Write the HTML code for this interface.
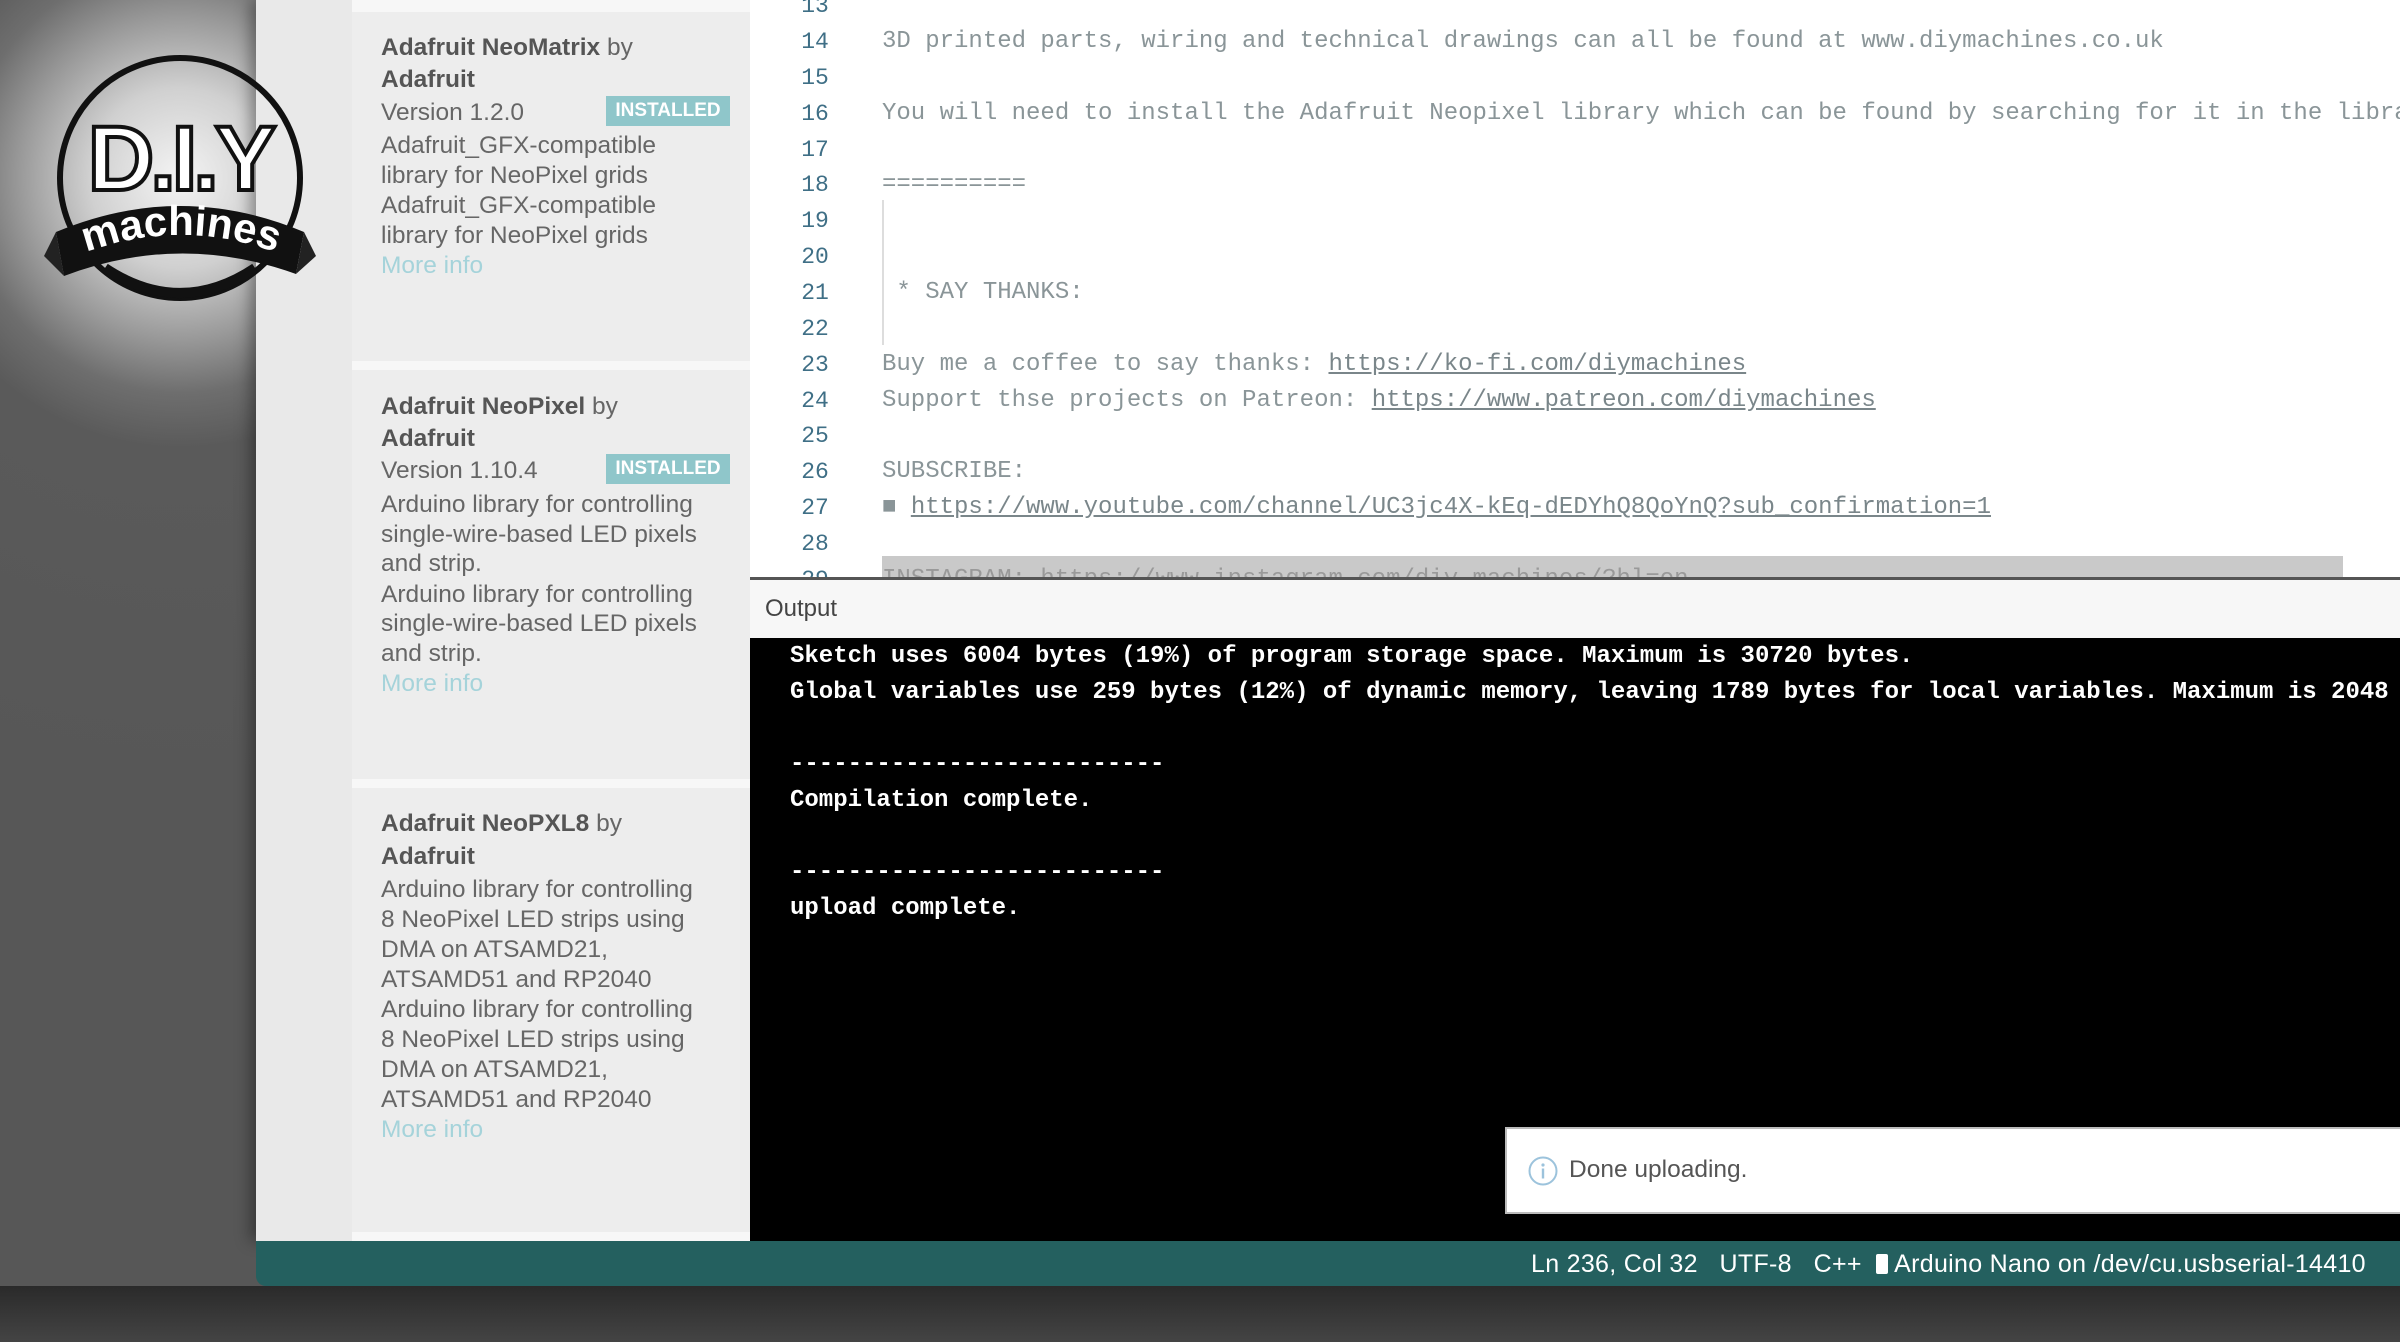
<!DOCTYPE html>
<html><head><meta charset="utf-8"><style>
*{margin:0;padding:0;box-sizing:border-box}
body{width:2400px;height:1342px;overflow:hidden;position:relative;background:#555;font-family:"Liberation Sans",sans-serif}
#bg{position:absolute;left:0;top:0;width:2400px;height:1342px;background:radial-gradient(circle at 180px 178px,#f4f4f4 0,#d0d0d0 90px,#9a9a9a 160px,#6e6e6e 215px,#5a5a5a 270px,#575757 600px)}
#bottom{position:absolute;left:0;top:1286px;width:2400px;height:56px;background:linear-gradient(#2a2a2a,#444)}
#side{position:absolute;left:256px;top:0;width:494px;height:1241px;background:#e9e9e9;box-shadow:-6px 0 14px rgba(0,0,0,.35)}
.card{position:absolute;left:96px;width:398px;background:#ededed}
.gap{position:absolute;left:96px;width:398px;background:#f7f7f7}
.t{position:absolute;left:381px;font-size:24.5px;color:#666;white-space:nowrap;line-height:30px}
.b{font-weight:bold;color:#555}
.m{color:#a5d3da}
.badge{position:absolute;left:606px;width:124px;height:30px;background:#8fc6ca;color:#fff;font-weight:bold;font-size:19px;text-align:center;line-height:30px}
#ed{position:absolute;left:750px;top:0;width:1650px;height:577px;background:#fff;overflow:hidden}
.ln{position:absolute;left:0;width:130px;text-align:center;font-family:"Liberation Mono",monospace;font-size:23px;color:#3f6f86;line-height:36px}
.cd{position:absolute;left:132px;font-family:"Liberation Mono",monospace;font-size:24px;color:#8a9598;white-space:pre;line-height:36px}
.cd u{text-decoration:underline;color:#7a868a}
#outh{position:absolute;left:750px;top:577px;width:1650px;height:61px;background:#f7f7f7;border-top:3px solid #555}
#con{position:absolute;left:750px;top:638px;width:1650px;height:603px;background:#000;overflow:hidden}
.cl{position:absolute;left:40px;font-family:"Liberation Mono",monospace;font-weight:bold;font-size:24px;color:#fff;white-space:pre;line-height:36px}
#toast{position:absolute;left:1505px;top:1127px;width:900px;height:87px;background:#fff;border:2px solid #bbb}
#status{position:absolute;left:256px;top:1241px;width:2144px;height:45px;background:#24605f;border-bottom-left-radius:10px;color:#fff;font-size:25px;line-height:47px;white-space:nowrap;letter-spacing:0.3px}
</style></head><body>
<div id="bg"></div>
<div id="bottom"></div>
<div id="side">
<div class="gap" style="top:0;height:12px"></div>
<div class="card" style="top:12px;height:349px"></div>
<div class="gap" style="top:361px;height:9px"></div>
<div class="card" style="top:370px;height:409px"></div>
<div class="gap" style="top:779px;height:9px"></div>
<div class="card" style="top:788px;height:444px"></div>
<div class="gap" style="top:1232px;height:9px"></div>
</div>
<div class="t" style="top:33px"><span class="b">Adafruit NeoMatrix</span> by</div>
<div class="t b" style="top:65px">Adafruit</div>
<div class="t" style="top:98px">Version 1.2.0</div>
<div class="badge" style="top:96px">INSTALLED</div>
<div class="t" style="top:131px">Adafruit_GFX-compatible</div>
<div class="t" style="top:161px">library for NeoPixel grids</div>
<div class="t" style="top:191px">Adafruit_GFX-compatible</div>
<div class="t" style="top:221px">library for NeoPixel grids</div>
<div class="t m" style="top:251px">More info</div>

<div class="t" style="top:392px"><span class="b">Adafruit NeoPixel</span> by</div>
<div class="t b" style="top:424px">Adafruit</div>
<div class="t" style="top:456px">Version 1.10.4</div>
<div class="badge" style="top:454px">INSTALLED</div>
<div class="t" style="top:490px">Arduino library for controlling</div>
<div class="t" style="top:520px">single-wire-based LED pixels</div>
<div class="t" style="top:549px">and strip.</div>
<div class="t" style="top:580px">Arduino library for controlling</div>
<div class="t" style="top:609px">single-wire-based LED pixels</div>
<div class="t" style="top:639px">and strip.</div>
<div class="t m" style="top:669px">More info</div>

<div class="t" style="top:809px"><span class="b">Adafruit NeoPXL8</span> by</div>
<div class="t b" style="top:842px">Adafruit</div>
<div class="t" style="top:875px">Arduino library for controlling</div>
<div class="t" style="top:905px">8 NeoPixel LED strips using</div>
<div class="t" style="top:935px">DMA on ATSAMD21,</div>
<div class="t" style="top:965px">ATSAMD51 and RP2040</div>
<div class="t" style="top:995px">Arduino library for controlling</div>
<div class="t" style="top:1025px">8 NeoPixel LED strips using</div>
<div class="t" style="top:1055px">DMA on ATSAMD21,</div>
<div class="t" style="top:1085px">ATSAMD51 and RP2040</div>
<div class="t m" style="top:1115px">More info</div>

<div id="ed">
<div class="ln" style="top:-12px">13</div>
<div class="ln" style="top:24px">14</div>
<div class="ln" style="top:60px">15</div>
<div class="ln" style="top:96px">16</div>
<div class="ln" style="top:132px">17</div>
<div class="ln" style="top:167px">18</div>
<div class="ln" style="top:203px">19</div>
<div class="ln" style="top:239px">20</div>
<div class="ln" style="top:275px">21</div>
<div class="ln" style="top:311px">22</div>
<div class="ln" style="top:347px">23</div>
<div class="ln" style="top:383px">24</div>
<div class="ln" style="top:418px">25</div>
<div class="ln" style="top:454px">26</div>
<div class="ln" style="top:490px">27</div>
<div class="ln" style="top:526px">28</div>
<div class="ln" style="top:562px">29</div>
<div style="position:absolute;left:132px;top:200px;width:2px;height:145px;background:#ddd"></div>
<div class="cd" style="top:24px">3D printed parts, wiring and technical drawings can all be found at www.diymachines.co.uk</div>
<div class="cd" style="top:96px">You will need to install the Adafruit Neopixel library which can be found by searching for it in the library manager</div>
<div class="cd" style="top:167px">==========</div>
<div class="cd" style="top:275px"> * SAY THANKS:</div>
<div class="cd" style="top:347px">Buy me a coffee to say thanks: <u>https://ko-fi.com/diymachines</u></div>
<div class="cd" style="top:383px">Support thse projects on Patreon: <u>https://www.patreon.com/diymachines</u></div>
<div class="cd" style="top:454px">SUBSCRIBE:</div>
<div class="cd" style="top:490px">&#9632; <u>https://www.youtube.com/channel/UC3jc4X-kEq-dEDYhQ8QoYnQ?sub_confirmation=1</u></div>
<div style="position:absolute;left:132px;top:556px;width:1461px;height:21px;background:#c9c9c9"></div>
<div class="cd" style="top:562px;color:#999">INSTAGRAM: https://www.instagram.com/diy_machines/?hl=en</div>
</div>
<div id="outh"><div style="position:absolute;left:15px;top:15px;font-size:24px;color:#444">Output</div></div>
<div id="con">
<div class="cl" style="top:1px">Sketch uses 6004 bytes (19%) of program storage space. Maximum is 30720 bytes.</div>
<div class="cl" style="top:37px">Global variables use 259 bytes (12%) of dynamic memory, leaving 1789 bytes for local variables. Maximum is 2048 bytes.</div>
<div class="cl" style="top:109px">--------------------------</div>
<div class="cl" style="top:145px">Compilation complete.</div>
<div class="cl" style="top:217px">--------------------------</div>
<div class="cl" style="top:253px">upload complete.</div>
</div>
<div id="toast">
<svg style="position:absolute;left:20px;top:26px" width="32" height="32" viewBox="0 0 32 32"><circle cx="16" cy="16" r="13.5" fill="none" stroke="#9cc3dc" stroke-width="2"/><circle cx="16" cy="10" r="1.6" fill="#9cc3dc"/><rect x="14.8" y="13.5" width="2.4" height="10" fill="#9cc3dc"/></svg>
<div style="position:absolute;left:62px;top:27px;font-size:24.5px;color:#555">Done uploading.</div>
</div>
<div id="status"><span style="position:absolute;left:1275px">Ln 236, Col 32&nbsp;&nbsp; UTF-8 &nbsp;&nbsp;C++ &nbsp;<span style="display:inline-block;width:12px;height:20px;background:#fff;border-radius:2px;vertical-align:-2px"></span> Arduino Nano on /dev/cu.usbserial-14410</span></div>

<svg style="position:absolute;left:0;top:0" width="360" height="360" viewBox="0 0 360 360">
<circle cx="180" cy="178" r="120" fill="none" stroke="#111" stroke-width="6"/>
<path d="M105 268 Q180 318 255 268" fill="none" stroke="#111" stroke-width="10"/>
<text x="180" y="190" text-anchor="middle" font-family="Liberation Sans,sans-serif" font-weight="bold" font-size="92" fill="#fff" stroke="#111" stroke-width="4" letter-spacing="-4">D.I.Y</text>
<path d="M56 232 Q180 180 304 232 L296 274 Q180 232 64 276 Z" fill="#111"/>
<path d="M56 232 L44 256 L64 276 Z M304 232 L316 256 L296 274 Z" fill="#222"/>
<path id="arc" d="M72 258 Q180 212 290 258" fill="none"/>
<text font-family="Liberation Sans,sans-serif" font-weight="bold" font-size="42" fill="#fff"><textPath href="#arc" startOffset="50%" text-anchor="middle">machines</textPath></text>
</svg>
</body></html>
